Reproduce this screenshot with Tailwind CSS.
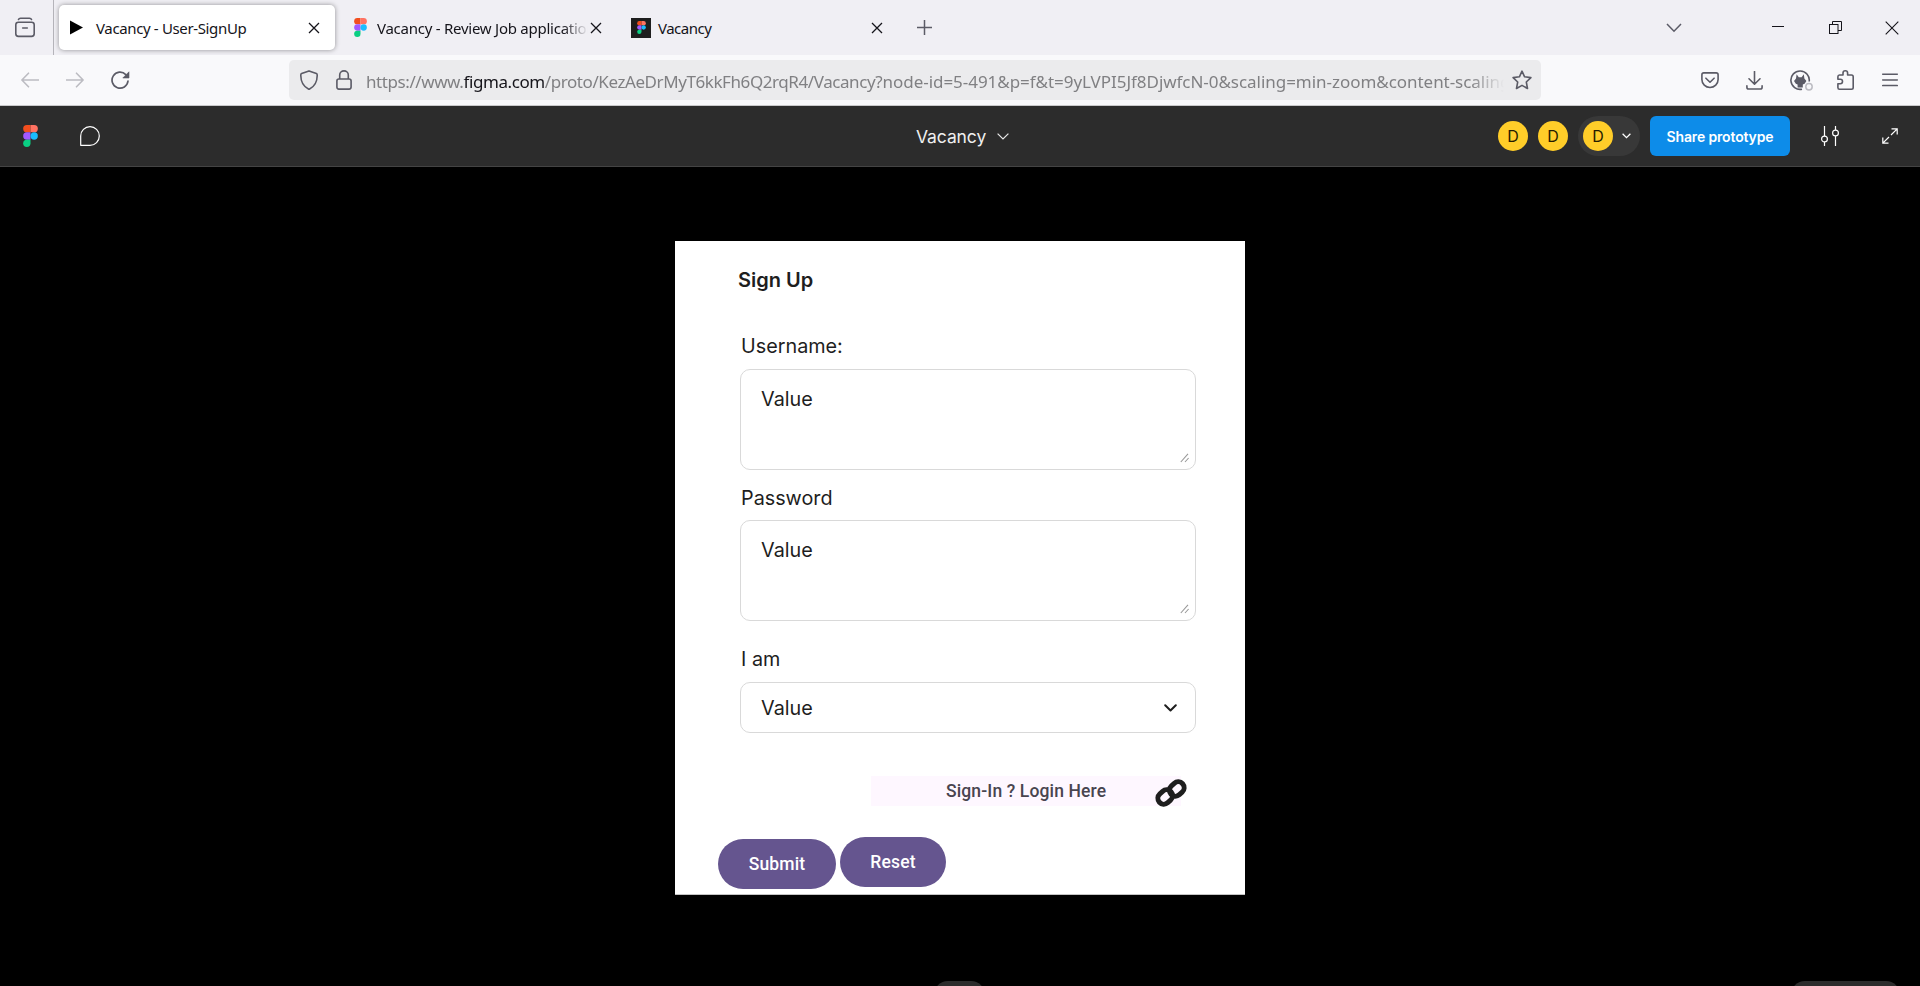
<!DOCTYPE html>
<html lang="en">
<head>
<meta charset="utf-8">
<title>Vacancy - User-SignUp</title>
<script src="https://cdn.jsdelivr.net/npm/@tailwindcss/browser@4"></script>
</head>
<body class="w-[1920px] h-[986px] overflow-hidden bg-black flex flex-col font-['Inter',sans-serif]">
<svg class="hidden">
  <symbol id="figma" viewBox="0 0 16 24">
    <path d="M4 0H8V8H4A4 4 0 0 1 4 0Z" fill="#f24e1e"/><path d="M8 0H12A4 4 0 0 1 12 8H8Z" fill="#ff7262"/>
    <path d="M4 8H8V16H4A4 4 0 0 1 4 8Z" fill="#a259ff"/><circle cx="12" cy="12" r="4" fill="#1abcfe"/>
    <path d="M4 16H8V20A4 4 0 1 1 4 16Z" fill="#0acf83"/>
  </symbol>
  <symbol id="x" viewBox="0 0 12 12"><path d="M1 1 11 11M11 1 1 11" fill="none" stroke="#15141a" stroke-width="1.3"/></symbol>
  <symbol id="grip" viewBox="0 0 10 10"><path d="M.8 9 8 .8M5 9 8.6 5" fill="none" stroke="#999" stroke-width="1.1"/></symbol>
</svg>

<!-- tab strip -->
<div class="h-[55px] shrink-0 bg-[#f0eff4] flex items-center font-['Noto_Sans',sans-serif] text-[15px] text-[#15141a]">
  <div class="w-[54px] h-full border-r border-[#b5b4ba] flex items-center pl-[14px]">
    <svg class="w-[22px] h-[22px]" viewBox="0 0 22 22" fill="none" stroke="#5b5b66" stroke-width="1.6" stroke-linecap="round"><path d="M4.5 2.5Q5 1.2 6.5 1.2H15.5Q17 1.2 17.5 2.5"/><rect x="1.8" y="5.2" width="18.4" height="14.2" rx="2.6"/><path d="M8.7 11H13.3"/></svg>
  </div>
  <div class="ml-[5px] w-[276px] h-[45px] rounded-[5px] bg-white shadow-[0_0_5px_rgba(0,0,0,0.4)] flex items-center pl-[11px]">
    <svg class="w-[13px] h-[15px]" viewBox="0 0 13 15"><path d="M0 .5V14.5L13 7.5Z" fill="#000"/></svg>
    <span class="ml-[13px] w-[212px] whitespace-nowrap leading-[22px] tracking-[-0.36px]">Vacancy - User-SignUp</span>
    <svg class="w-[12px] h-[12px]"><use href="#x"/></svg>
  </div>
  <div class="w-[285px] h-[45px] flex items-center pl-[19px]">
    <svg class="w-[13px] h-[19px]"><use href="#figma"/></svg>
    <span class="ml-[10px] w-[211px] overflow-hidden whitespace-nowrap leading-[22px] tracking-[-0.25px] [mask-image:linear-gradient(to_right,black_88%,transparent)]">Vacancy - Review Job application</span>
    <svg class="ml-[2px] w-[12px] h-[12px]"><use href="#x"/></svg>
  </div>
  <div class="w-[285px] h-[45px] flex items-center pl-[11px]">
    <div class="w-5 h-5 bg-[#1e1e1e] flex items-center justify-center"><svg class="w-[9px] h-[13px]"><use href="#figma"/></svg></div>
    <span class="ml-[7px] w-[213px] whitespace-nowrap leading-[22px] tracking-[-0.5px]">Vacancy</span>
    <svg class="w-[12px] h-[12px]"><use href="#x"/></svg>
  </div>
  <svg class="ml-[12px] w-[15px] h-[15px]" viewBox="0 0 15 15" stroke="#5b5b66" stroke-width="1.5"><path d="M7.5 0V15M0 7.5H15"/></svg>
  <svg class="ml-auto w-4 h-[10px]" viewBox="0 0 16 10" fill="none" stroke="#5b5b66" stroke-width="1.5"><path d="M1 1 8 8.2 15 1"/></svg>
  <svg class="ml-[90px] mb-[2px] w-[12px] h-[2px]" viewBox="0 0 12 2"><path d="M0 0H12V1H0Z" fill="#15141a"/></svg>
  <svg class="ml-[45px] w-[13px] h-[13px]" viewBox="0 0 13 13" fill="none" stroke="#15141a"><rect x=".5" y="3.5" width="8.5" height="9"/><path d="M3.5 3.5V.5H12.5V9.5H9"/></svg>
  <svg class="ml-[43px] mr-[21px] w-[14px] h-[14px]" viewBox="0 0 14 14" stroke="#15141a" stroke-width="1.1"><path d="M.7.7 13.3 13.3M13.3.7.7 13.3"/></svg>
</div>

<!-- address bar -->
<div class="h-[51px] shrink-0 bg-[#f9f9fb] border-b border-[#c9c9cb] flex items-center">
  <svg class="ml-[21px] w-[18px] h-4" viewBox="0 0 18 16" fill="none" stroke="#bcbcc2" stroke-width="1.6" stroke-linecap="round" stroke-linejoin="round"><path d="M17.5 8H1M7.5 1.2.9 8 7.5 14.8"/></svg>
  <svg class="ml-[27px] w-[18px] h-4" viewBox="0 0 18 16" fill="none" stroke="#bcbcc2" stroke-width="1.6" stroke-linecap="round" stroke-linejoin="round"><path d="M.5 8H17M10.5 1.2 17.1 8 10.5 14.8"/></svg>
  <svg class="ml-[27px] w-[19px] h-[19px]" viewBox="0 0 19 19"><path d="M14.8 3.6A8 8 0 1 0 17 10" fill="none" stroke="#5b5b66" stroke-width="1.7" stroke-linecap="round"/><path d="M18 .8V7H11.8Z" fill="#5b5b66" stroke="#5b5b66" stroke-width=".6" stroke-linejoin="round"/></svg>
  <div class="ml-[159px] w-[1252px] h-10 rounded-[5px] bg-[#ebebed] flex items-center pl-[11px]">
    <svg class="w-[18px] h-5" viewBox="0 0 18 20" fill="none" stroke="#5b5b66" stroke-width="1.6" stroke-linejoin="round"><path d="M9 .9 16.4 3.6Q17.2 3.9 17.2 5C17.3 11 14.6 16.4 9.6 19Q9 19.3 8.4 19C3.4 16.4 .7 11 .8 5Q.8 3.9 1.6 3.6Z"/></svg>
    <svg class="ml-[18px] w-4 h-5" viewBox="0 0 16 20" fill="none" stroke="#5b5b66" stroke-width="1.6"><rect x=".9" y="9" width="14.2" height="10.1" rx="2"/><path d="M3.7 9V5A4.3 4.1 0 0 1 12.3 5V9"/></svg>
    <span class="ml-[14px] w-[1138px] overflow-hidden whitespace-nowrap font-['Noto_Sans',sans-serif] text-[17px] leading-[30px] text-[#808083] tracking-[-0.42px] pt-[3px] [mask-image:linear-gradient(to_right,black_97%,transparent)]">https://www.<span class="text-[#15141a]">figma.com</span>/proto/KezAeDrMyT6kkFh6Q2rqR4/Vacancy<span class="tracking-[-0.04px]">?node-id=5-491&amp;p=f&amp;t=9yLVPI5Jf8DjwfcN-0&amp;scaling=min-zoom&amp;content-scaling</span></span>
    <svg class="ml-[8px] w-5 h-5" viewBox="0 0 20 20" fill="none" stroke="#5b5b66" stroke-width="1.6" stroke-linejoin="round"><path d="M10 1.2 12.6 6.8 18.9 7.6 14.3 12 15.5 18.5 10 15.4 4.5 18.5 5.7 12 1.1 7.6 7.4 6.8Z"/></svg>
  </div>
  <svg class="ml-[160px] w-[18px] h-[17px]" viewBox="0 0 18 17" fill="none" stroke="#5b5b66" stroke-width="1.6" stroke-linecap="round" stroke-linejoin="round"><path d="M2.8 .9H15.2Q17.1 .9 17.1 2.8V7.5A8.1 8 0 0 1 .9 7.5V2.8Q.9 .9 2.8 .9Z"/><path d="M4.9 6.2 9 10.2 13.1 6.2"/></svg>
  <svg class="ml-[27px] w-[17px] h-[19px]" viewBox="0 0 17 19" fill="none" stroke="#5b5b66" stroke-width="1.6" stroke-linecap="round" stroke-linejoin="round"><path d="M8.5 .5V13M3 7.8 8.5 13.2 14 7.8M.9 14.8V16.2Q.9 18 2.7 18H14.3Q16.1 18 16.1 16.2V14.8"/></svg>
  <svg class="ml-[27px] w-[23px] h-[21px]" viewBox="0 0 23 21"><path d="M12 19.2A9.2 9.2 0 1 1 19.2 11.5" fill="none" stroke="#5b5b66" stroke-width="1.6"/><path d="M6.6 4.3 8.8 7.2H11.6L13.8 4.3 14.4 8.5 16.4 11 14.6 13.8 12.8 14.6V17.6H7.6V14.6L5.8 13.8 4 11 6 8.5Z" fill="#5b5b66"/><circle cx="19" cy="16.7" r="3.2" fill="#f9f9fb" stroke="#bcbcc2" stroke-width="1.5"/></svg>
  <svg class="ml-[24px] w-[17px] h-5" viewBox="0 0 17 20" fill="none" stroke="#5b5b66" stroke-width="1.6" stroke-linejoin="round"><path d="M2.5 5H6V3A2.3 2.2 0 0 1 10.6 3V5H14.5Q16.2 5 16.2 6.7V17.5Q16.2 19.2 14.5 19.2H2.5Q.9 19.2 .9 17.5V13.7H3.3A2.2 2.2 0 0 0 3.3 9.3H.9V6.7Q.9 5 2.5 5Z"/></svg>
  <svg class="ml-[28px] w-4 h-[14px]" viewBox="0 0 16 14" stroke="#5b5b66" stroke-width="1.5" stroke-linecap="round"><path d="M.7 1.2H15.3M.7 6.9H15.3M.7 12.6H15.3"/></svg>
</div>

<!-- prototype toolbar -->
<div class="h-[61px] shrink-0 bg-[#2c2c2c] border-b border-[#444] flex items-center">
  <svg class="ml-[23px] w-[15px] h-[22px]"><use href="#figma"/></svg>
  <svg class="ml-[42px] w-5 h-5" viewBox="0 0 20 20" fill="none" stroke="#fff" stroke-width="1.2" stroke-linejoin="round"><path d="M.7 19.3V10A9.3 9.3 0 1 1 10 19.3Z"/></svg>
  <span class="ml-[816px] w-[81px] mt-[2px] text-[17.5px] leading-6 tracking-[-0.1px] text-[#efefef]">Vacancy</span>
  <svg class="w-[12px] h-[7px]" viewBox="0 0 12 7" fill="none" stroke="#e8e8e8" stroke-width="1.2"><path d="M.6 .6 6 6 11.4 .6"/></svg>
  <div class="ml-[489px] flex items-center gap-[10px] text-[16px] text-[#241c00]">
    <div class="w-[30px] h-[30px] rounded-full bg-[#ffcd29] flex items-center justify-center">D</div>
    <div class="w-[30px] h-[30px] rounded-full bg-[#ffcd29] flex items-center justify-center">D</div>
    <div class="w-[62px] h-10 rounded-full bg-[#383838] flex items-center pl-[5px]">
      <div class="w-[30px] h-[30px] rounded-full bg-[#ffcd29] flex items-center justify-center">D</div>
      <svg class="ml-[9px] w-[9px] h-[6px]" viewBox="0 0 9 6" fill="none" stroke="#fff" stroke-width="1.3"><path d="M.6 .7 4.5 4.6 8.4 .7"/></svg>
    </div>
    <div class="w-[140px] h-10 rounded-[6px] bg-[#0d8ce9] text-white font-semibold text-[14px] tracking-[-0.15px] flex items-center justify-center whitespace-nowrap">Share prototype</div>
  </div>
  <svg class="ml-[31px] w-[18px] h-5" viewBox="0 0 18 20" fill="none" stroke="#fff" stroke-width="1.2"><path d="M3.5 0V10M3.5 16V20M14.5 0V4M14.5 10V20"/><circle cx="3.5" cy="13" r="2.9"/><circle cx="14.5" cy="7" r="2.9"/></svg>
  <svg class="ml-[43px] w-4 h-4" viewBox="0 0 16 16" fill="none" stroke="#fff" stroke-width="1.2"><path d="M9.5 .8H15.2V6.5M15.2 .8 9 7M.8 9.5V15.2H6.5M.8 15.2 7 9"/></svg>
</div>

<!-- canvas -->
<div class="flex-1 pt-[74px] flex flex-col items-center">
  <div class="w-[570px] h-[654px] shrink-0 bg-white border-b border-[#c4c4c4] text-[19.8px] leading-[28px] text-[#1e1e1e] flex flex-col pl-[65px] pr-[49px]">
    <h1 class="mt-[25px] -ml-[2px] font-semibold text-[20px]">Sign Up</h1>
    <label class="mt-[38px] pl-[1px]">Username:</label>
    <div class="mt-[9px] h-[101px] rounded-[10px] border border-[#d9d9d9] pt-[15px] pl-[20px] pr-[5px] pb-[6px] flex justify-between">
      <span>Value</span><svg class="self-end w-[10px] h-[10px]"><use href="#grip"/></svg>
    </div>
    <label class="mt-[14px] pl-[1px]">Password</label>
    <div class="mt-[8px] h-[101px] rounded-[10px] border border-[#d9d9d9] pt-[15px] pl-[20px] pr-[5px] pb-[6px] flex justify-between">
      <span>Value</span><svg class="self-end w-[10px] h-[10px]"><use href="#grip"/></svg>
    </div>
    <label class="mt-[24px] pl-[1px]">I am</label>
    <div class="mt-[9px] h-[51px] rounded-[10px] border border-[#d9d9d9] pl-[20px] pr-[18px] flex items-center justify-between">
      <span>Value</span><svg class="w-[13px] h-[8px]" viewBox="0 0 13 8" fill="none" stroke="#1e1e1e" stroke-width="2" stroke-linecap="round" stroke-linejoin="round"><path d="M1.2 1.2 6.5 6.5 11.8 1.2"/></svg>
    </div>
    <div class="mt-[43px] ml-[131px] w-[316px] h-[31px] flex">
      <div class="w-[310px] h-[30px] shrink-0 bg-[#fef7ff] flex items-center pl-[75px] font-['Roboto',sans-serif] font-medium text-[17.5px] tracking-[0.13px] text-[#49454f] whitespace-nowrap">Sign-In ? Login Here</div>
      <svg class="-ml-[26px] mt-[3px] w-[32px] h-[28px] shrink-0" viewBox="0 0 32 28" fill="none" stroke="#1e1e1e" stroke-width="5"><rect x="-7.8" y="-5.9" width="15.6" height="11.8" rx="5.9" transform="translate(21.8 10) rotate(-42)"/><rect x="-7.8" y="-5.9" width="15.6" height="11.8" rx="5.9" transform="translate(10.2 18) rotate(-42)"/></svg>
    </div>
    <div class="mt-[30px] -ml-[22px] flex gap-[4px] font-['Roboto',sans-serif] font-medium text-[17.5px] tracking-[0.15px] text-white">
      <div class="mt-[2px] w-[118px] h-[50px] rounded-full bg-[#65558f] flex items-center justify-center">Submit</div>
      <div class="w-[106px] h-[50px] rounded-full bg-[#65558f] flex items-center justify-center">Reset</div>
    </div>
  </div>
  <div class="mt-[86px] w-full h-[5px] shrink-0 overflow-hidden flex">
    <div class="ml-[934px] w-[51px] h-10 shrink-0 rounded-[14px] bg-[#2c2c2c]"></div>
    <div class="ml-[806px] w-[109px] h-10 shrink-0 rounded-[14px] bg-[#2c2c2c]"></div>
  </div>
</div>
</body>
</html>
